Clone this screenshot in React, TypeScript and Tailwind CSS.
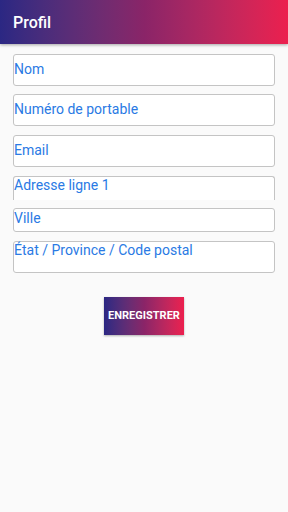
import React from 'react';

const Field = ({ label, className }: { label: string; className: string }) => (
  <div className={`bg-white border border-[#c4c4c4] rounded-[3px] text-[14px] leading-[17px] text-[#2a7ae4] ${className}`}>
    {label}
  </div>
);

const App = () => {
  return (
    <div className="w-[288px] h-[512px] bg-[#fafafa] flex flex-col" style={{ fontFamily: 'Roboto, "Liberation Sans", sans-serif' }}>
      <div className="h-[44px] bg-gradient-to-r from-[#2b2783] via-[#8a2468] to-[#ec1f4e] flex items-center pl-[13px] pt-[2px] shadow-[0_1px_3px_rgba(0,0,0,0.35)]">
        <span className="text-white text-[16px] font-medium">Profil</span>
      </div>
      <div className="flex flex-col px-[13px] pt-[10px]">
        <Field label="Nom" className="h-[32px] flex items-center pb-px" />
        <Field label="Numéro de portable" className="h-[32px] mt-[8px] flex items-center pb-px" />
        <Field label="Email" className="h-[32px] mt-[9px] flex items-center pb-px" />
        <Field label="Adresse ligne 1" className="h-[24px] mt-[9px] border-b-0 rounded-b-none" />
        <Field label="Ville" className="h-[24px] mt-[8px] pt-[1px]" />
        <Field label="État / Province / Code postal" className="h-[32px] mt-[9px]" />
      </div>
      <div className="flex justify-center mt-[24px]">
        <button className="w-[80px] h-[38px] bg-gradient-to-r from-[#2b2783] via-[#8a2468] to-[#ec1f4e] text-white text-[11px] font-bold shadow-[0_1px_2px_rgba(0,0,0,0.3)]">
          ENREGISTRER
        </button>
      </div>
    </div>
  );
};

export default App;
